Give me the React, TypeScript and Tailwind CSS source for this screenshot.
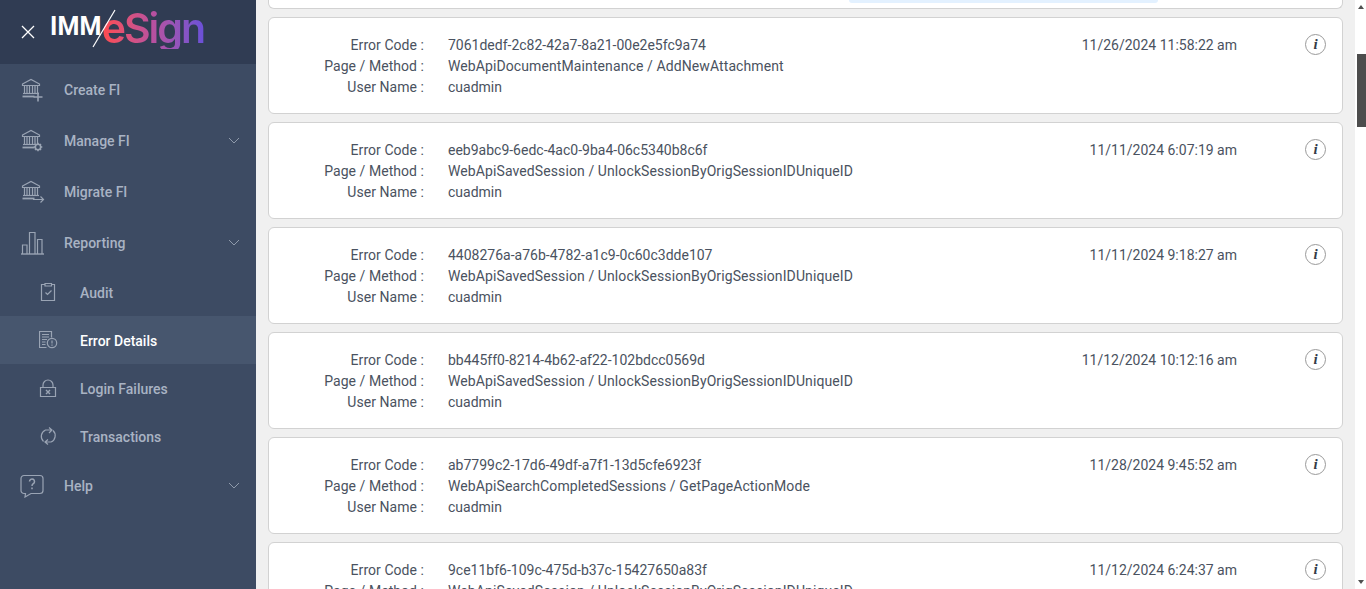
import React from 'react';

const iconStroke = '#9aa4b4';

const Bank: React.FC<{ children?: React.ReactNode }> = ({ children }) => (
  <svg width="26" height="26" viewBox="0 0 26 26" fill="none" stroke={iconStroke} strokeWidth="1.2">
    <path d="M2.5 7 11 2.500 19.500 7V8.500H2.500Z" />
    <path d="M4.500 8.500v7.500M7 8.500v7.500M9.500 8.500v7.500M12.500 8.500v7.500M15 8.500v7.500M17.500 8.500v7.500" />
    <path d="M3 16.500h16" />
    <path d="M2.500 19.500h12" strokeWidth="1.8" />
    {children}
  </svg>
);

const navIcons: Record<string, React.ReactNode> = {
  create: (
    <Bank>
      <path d="M18 15.500v9M13.500 20h9" strokeWidth="1.6" />
    </Bank>
  ),
  manage: (
    <Bank>
      <circle cx="18" cy="19" r="2.700" strokeWidth="1.6" fill="#3d4b63" />
      <path d="M18 14.700v1.600M18 21.700v1.600M13.700 19h1.600M20.700 19h1.600M15 16l1 1M20 21l1 1M15 22l1-1M20 17l1-1" strokeWidth="1.500" />
    </Bank>
  ),
  migrate: (
    <Bank>
      <path d="M13 20.500h10.500M20.500 17.500l3 3-3 3" strokeWidth="1.200" />
    </Bank>
  ),
  reporting: (
    <svg width="26" height="26" viewBox="0 0 26 26" fill="none" stroke={iconStroke} strokeWidth="1.200">
      <path d="M1 24h23" strokeWidth="1.400" />
      <path d="M2.500 24v-9h4.500v9M9.500 24V2.500h5.500V24M17.500 24V9.500h4.500V24" />
    </svg>
  ),
};

const subIcons: Record<string, React.ReactNode> = {
  audit: (
    <svg width="20" height="20" viewBox="0 0 20 20" fill="none" stroke={iconStroke} strokeWidth="1.200">
      <path d="M6 2.500H2.500v16h13v-16H12.500" />
      <path d="M6 1.500h6.500v2.500H6z" />
      <path d="M6.500 10.500l2 2 4-4" />
    </svg>
  ),
  errors: (
    <svg width="20" height="20" viewBox="0 0 20 20" fill="none" stroke={iconStroke} strokeWidth="1.200">
      <path d="M7.500 17.500H.5V1.500h12v6" />
      <path d="M3 4.500h7M3 7h7M3 9.500h5M3 12h3.500M3 14.500h3.500" />
      <circle cx="13" cy="13" r="4.700" />
      <path d="M13 10.500v3M13 14.500v1.200" />
    </svg>
  ),
  login: (
    <svg width="20" height="20" viewBox="0 0 20 20" fill="none" stroke={iconStroke} strokeWidth="1.200">
      <path d="M4 9.500V7a5 5 0 0 1 10 0v2.500" />
      <path d="M1.500 9.500h15v9h-15z" />
      <path d="M7 12l4 4M11 12l-4 4" strokeWidth="1.400" />
    </svg>
  ),
  transactions: (
    <svg width="20" height="20" viewBox="0 0 20 20" fill="none" stroke={iconStroke} strokeWidth="1.200">
      <path d="M4.500 15.500A7 7 0 0 1 6.500 4H13M10 1.500 13 4 10 7" />
      <path d="M14 4.500A7 7 0 0 1 12 16H6M9 13.500 6 16l3 2.500" />
    </svg>
  ),
};

const Chevron = () => (
  <svg width="12" height="7" viewBox="0 0 12 7" fill="none" stroke="#8f9aab" strokeWidth="1">
    <path d="M1 1l5 5 5-5" />
  </svg>
);

const mainRow = 'flex h-[51px] items-center';

const errors = [
  { code: '7061dedf-2c82-42a7-8a21-00e2e5fc9a74', method: 'WebApiDocumentMaintenance / AddNewAttachment', time: '11/26/2024 11:58:22 am' },
  { code: 'eeb9abc9-6edc-4ac0-9ba4-06c5340b8c6f', method: 'WebApiSavedSession / UnlockSessionByOrigSessionIDUniqueID', time: '11/11/2024 6:07:19 am' },
  { code: '4408276a-a76b-4782-a1c9-0c60c3dde107', method: 'WebApiSavedSession / UnlockSessionByOrigSessionIDUniqueID', time: '11/11/2024 9:18:27 am' },
  { code: 'bb445ff0-8214-4b62-af22-102bdcc0569d', method: 'WebApiSavedSession / UnlockSessionByOrigSessionIDUniqueID', time: '11/12/2024 10:12:16 am' },
  { code: 'ab7799c2-17d6-49df-a7f1-13d5cfe6923f', method: 'WebApiSearchCompletedSessions / GetPageActionMode', time: '11/28/2024 9:45:52 am' },
  { code: '9ce11bf6-109c-475d-b37c-15427650a83f', method: 'WebApiSavedSession / UnlockSessionByOrigSessionIDUniqueID', time: '11/12/2024 6:24:37 am' },
];

const ErrorCard: React.FC<{ code: string; method: string; time: string }> = ({ code, method, time }) => (
  <div className="flex h-[97px] shrink-0 rounded-[6px] border border-[#d2d2d2] bg-white pt-[17px] text-[14px] leading-[21px] text-[#4a5260]">
    <div className="w-[155px] shrink-0 text-right tracking-[0.05px]">
      <div>Error Code :</div>
      <div>Page / Method :</div>
      <div>User Name :</div>
    </div>
    <div className="ml-6 w-[500px] shrink-0">
      <div>{code}</div>
      <div className="tracking-[0.1px]">{method}</div>
      <div>cuadmin</div>
    </div>
    <div className="flex-1 pr-[68px] text-right">{time}</div>
    <div className="mr-[16px] -mt-px flex h-[21px] w-[21px] items-center justify-center rounded-full border border-[#9a9a9a] font-['Liberation_Serif',serif] text-[15px] font-bold italic text-[#333b48]">
      i
    </div>
  </div>
);

export default function App() {
  return (
    <div className="flex h-[589px] w-[1366px] overflow-hidden bg-[#f0f0f0] font-['Roboto',sans-serif]">
      <aside className="w-[256px] shrink-0 bg-[#3d4b63] text-[14px] font-medium text-[#a9b3c3]">
        <div className="relative flex h-16 items-center bg-[#303c53] pl-[21px]">
          <svg width="14" height="14" viewBox="0 0 14 14" stroke="#ffffff" strokeWidth="1.300">
            <path d="M1 1l12 12M13 1 1 13" />
          </svg>
          <span className="mb-[12px] ml-[15px] text-[25px] font-bold leading-none tracking-[0.2px] text-white">IMM</span>
          <span className="mb-[8px] bg-gradient-to-r from-[#ff4a4c] via-[#b8509f] to-[#6a50d8] bg-clip-text font-['Inter',sans-serif] text-[41px] font-semibold leading-none tracking-[-2px] text-transparent">
            eSign
          </span>
          <svg className="absolute left-[92px] top-[9px]" width="24" height="39" viewBox="0 0 24 39" stroke="#ffffff" strokeWidth="1.200">
            <path d="M23 1 1 38" />
          </svg>
        </div>

        <nav>
          <div className={mainRow}>
            <span className="ml-[20px] w-[44px]">{navIcons.create}</span>
            <span className="pt-[2px]">Create FI</span>
          </div>
          <div className={mainRow}>
            <span className="ml-[20px] w-[44px]">{navIcons.manage}</span>
            <span className="flex-1 pt-[2px]">Manage FI</span>
            <span className="mr-[16px]"><Chevron /></span>
          </div>
          <div className={mainRow}>
            <span className="ml-[20px] w-[44px]">{navIcons.migrate}</span>
            <span className="pt-[2px]">Migrate FI</span>
          </div>
          <div className={mainRow}>
            <span className="ml-[20px] w-[44px]">{navIcons.reporting}</span>
            <span className="flex-1 pt-[2px]">Reporting</span>
            <span className="mr-[16px]"><Chevron /></span>
          </div>

          <div className="flex h-12 items-center pl-[39px]">
            <span className="w-[41px]">{subIcons.audit}</span>
            <span className="pt-[2px]">Audit</span>
          </div>
          <div className="flex h-12 items-center bg-[#47566e] pl-[39px] text-white">
            <span className="w-[41px]">{subIcons.errors}</span>
            <span className="pt-[2px]">Error Details</span>
          </div>
          <div className="flex h-12 items-center pl-[39px]">
            <span className="w-[41px]">{subIcons.login}</span>
            <span className="pt-[2px]">Login Failures</span>
          </div>
          <div className="flex h-12 items-center pl-[39px]">
            <span className="w-[41px]">{subIcons.transactions}</span>
            <span className="pt-[2px]">Transactions</span>
          </div>

          <div className={mainRow}>
            <span className="ml-[20px] w-[44px]">
              <svg width="24" height="24" viewBox="0 0 24 24" fill="none" stroke={iconStroke} strokeWidth="1.200">
                <path d="M4 1.500h16a3 3 0 0 1 3 3v12a3 3 0 0 1-3 3H11l-6 3.500.5-3.500H4a3 3 0 0 1-3-3v-12a3 3 0 0 1 3-3z" />
                <path d="M9.500 7.500a2.500 2.500 0 1 1 3.800 2.100c-.9.6-1.300 1.100-1.300 2.400M12 13.500v1.700" strokeWidth="1.500" />
              </svg>
            </span>
            <span className="flex-1 pt-[2px]">Help</span>
            <span className="mr-[16px]"><Chevron /></span>
          </div>
        </nav>
      </aside>

      <main className="flex w-[1099px] shrink-0 flex-col gap-2 pl-3 pr-3">
        {/* card scrolled off the top, only its lower edge shows */}
        <div className="flex h-[9px] shrink-0 justify-end rounded-b-[6px] border border-t-0 border-[#d2d2d2] bg-white pr-[184px]">
          <div className="h-[3px] w-[309px] rounded-b-[6px] bg-[#e3f1ff]" />
        </div>
        {errors.map(e => (
          <ErrorCard key={e.code} code={e.code} method={e.method} time={e.time} />
        ))}
      </main>

      <div className="flex w-[11px] shrink-0 flex-col items-center bg-white">
        <div className="mt-[5px] h-0 w-0 border-x-[3px] border-b-[4px] border-x-transparent border-b-[#505050]" />
        <div className="ml-[2px] mt-[45px] h-[73px] w-[9px] bg-[#4d4d4d]" />
        <div className="mt-[453px] h-0 w-0 border-x-[3px] border-t-[4px] border-x-transparent border-t-[#505050]" />
      </div>
    </div>
  );
}
